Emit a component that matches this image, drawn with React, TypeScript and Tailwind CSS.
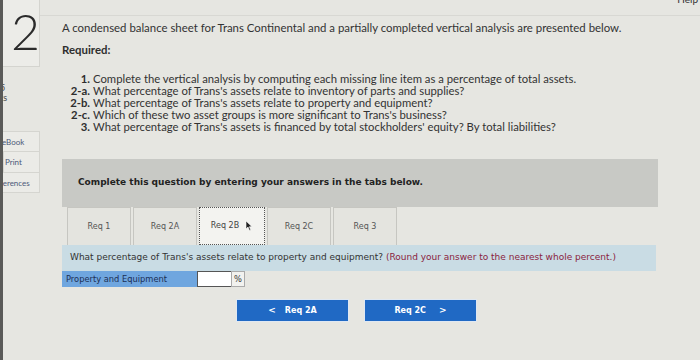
import React from 'react';

const tabs = ['Req 1', 'Req 2A', 'Req 2B', 'Req 2C', 'Req 3'];

const items: [string, string][] = [
  ['1.', 'Complete the vertical analysis by computing each missing line item as a percentage of total assets.'],
  ['2-a.', "What percentage of Trans's assets relate to inventory of parts and supplies?"],
  ['2-b.', "What percentage of Trans's assets relate to property and equipment?"],
  ['2-c.', "Which of these two asset groups is more significant to Trans's business?"],
  ['3.', "What percentage of Trans's assets is financed by total stockholders' equity? By total liabilities?"],
];

const Sidebar: React.FC = () => (
  <div className="w-[37px] shrink-0 overflow-hidden flex flex-col text-[#4a4a4a]">
    <div className="h-[67px] bg-[#ecece8] border-r border-b border-[#d4d4cf] flex justify-end overflow-hidden">
      <span className="text-[50px] leading-none font-light mt-[6px] mr-[-1px] text-[#2b2b2b]">2</span>
    </div>
    <div className="mt-[16px] flex flex-col items-start text-[9px] leading-[10px] ml-[-3px]">
      <span>5</span>
      <span>ts</span>
    </div>
    <div className="mt-[28px] flex flex-col text-[8px] text-[#4c5a78]">
      <div className="h-[21px] flex items-center ml-[-2px] bg-[#ebebe7] border border-[#d5d5d0]">eBook</div>
      <div className="h-[21px] flex items-center pl-[1px] bg-[#ebebe7] border border-t-0 border-[#d5d5d0]">Print</div>
      <div className="h-[20px] flex items-center ml-[-4px] bg-[#ebebe7] border border-t-0 border-[#d5d5d0]">ferences</div>
    </div>
  </div>
);

export default function App() {
  return (
    <div className="w-[700px] h-[360px] overflow-hidden bg-[#e6e6e1] flex" style={{ fontFamily: 'Lato, "Open Sans", sans-serif' }}>
      <div className="w-[3px] shrink-0 bg-[#5a5a58]" />
      <Sidebar />
      <main className="flex-1 flex flex-col ml-[22px] pr-[42px] text-[#333333]">
        <div className="flex justify-end mt-[-8px] mr-[-40px] text-[10px] text-[#333]">Help</div>
        <div className="border-t border-[#d8d8d3] mt-[8px] ml-[-22px] mr-[-42px]" />
        <p className="mt-[5px] text-[11.4px] leading-[14px]">
          A condensed balance sheet for Trans Continental and a partially completed vertical analysis are presented below.
        </p>
        <p className="mt-[8px] text-[11.4px] leading-[14px] font-bold text-[#2e2e2e]">Required:</p>
        <div className="mt-[16px] grid grid-cols-[28px_1fr] gap-x-[3px] text-[11.3px] leading-[12px]">
          {items.map(([label, text]) => (
            <React.Fragment key={label}>
              <span className="text-right font-bold text-[#2e2e2e]">{label}</span>
              <span>{text}</span>
            </React.Fragment>
          ))}
        </div>
        <div
          className="mt-[26px] w-[596px] h-[48px] bg-[#c8c9c5] flex items-center pl-[16px]"
          style={{ fontFamily: '"DejaVu Sans", Verdana, sans-serif' }}
        >
          <span className="text-[9px] font-bold text-[#222]">Complete this question by entering your answers in the tabs below.</span>
        </div>
        <div className="w-[594px]" style={{ fontFamily: '"DejaVu Sans", Verdana, sans-serif' }}>
          <div className="flex gap-[2px] pl-[5px] h-[38px]">
            {tabs.map(t => (
              <div
                key={t}
                className={
                  t === 'Req 2B'
                    ? 'w-[66px] flex items-center justify-center text-[8px] text-[#444] bg-[#f3f3f0] border-[1.5px] border-dotted border-[#555]'
                    : 'w-[64px] flex items-center justify-center text-[8px] text-[#555] bg-[#e4e4df] border border-[#c6c6c1] border-b-0'
                }
              >
                {t}
                {t === 'Req 2B' && (
                  <svg width="8" height="10" viewBox="0 0 8 10" className="ml-[6px]">
                    <path d="M1 0 L1 8 L3 6 L4.5 9.5 L5.8 9 L4.4 5.7 L7 5.7 Z" fill="#222" stroke="#fff" strokeWidth="0.6" />
                  </svg>
                )}
              </div>
            ))}
          </div>
          <div className="h-[26px] bg-[#c9dce4] flex items-center pl-[8px] text-[9px] text-[#333]">
            <span>
              What percentage of Trans's assets relate to property and equipment?{' '}
              <span className="text-[#8a2340]">(Round your answer to the nearest whole percent.)</span>
            </span>
          </div>
          <div className="flex h-[16px] text-[8.3px]">
            <div className="w-[135px] bg-[#6fa6df] flex items-center pl-[4px] text-[#1c2f55]">Property and Equipment</div>
            <div className="w-[34px] bg-white border-t-[1.5px] border-l-[1.5px] border-b border-[#555]" />
            <div className="w-[14px] bg-[#f2f2ef] border border-[#aaa] flex items-center justify-center text-[#333]">%</div>
          </div>
          <div className="flex gap-[15px] ml-[174px] mt-[12px] text-white text-[8px] font-bold">
            <div className="w-[113px] h-[23px] bg-[#2069c4] flex items-center justify-center gap-[9px] border border-[#dfe8f3]">
              <span className="text-[9px]">&lt;</span>
              <span>Req 2A</span>
            </div>
            <div className="w-[113px] h-[23px] bg-[#2069c4] flex items-center justify-center gap-[13px] border border-[#dfe8f3]">
              <span>Req 2C</span>
              <span className="text-[9px]">&gt;</span>
            </div>
          </div>
        </div>
      </main>
    </div>
  );
}
